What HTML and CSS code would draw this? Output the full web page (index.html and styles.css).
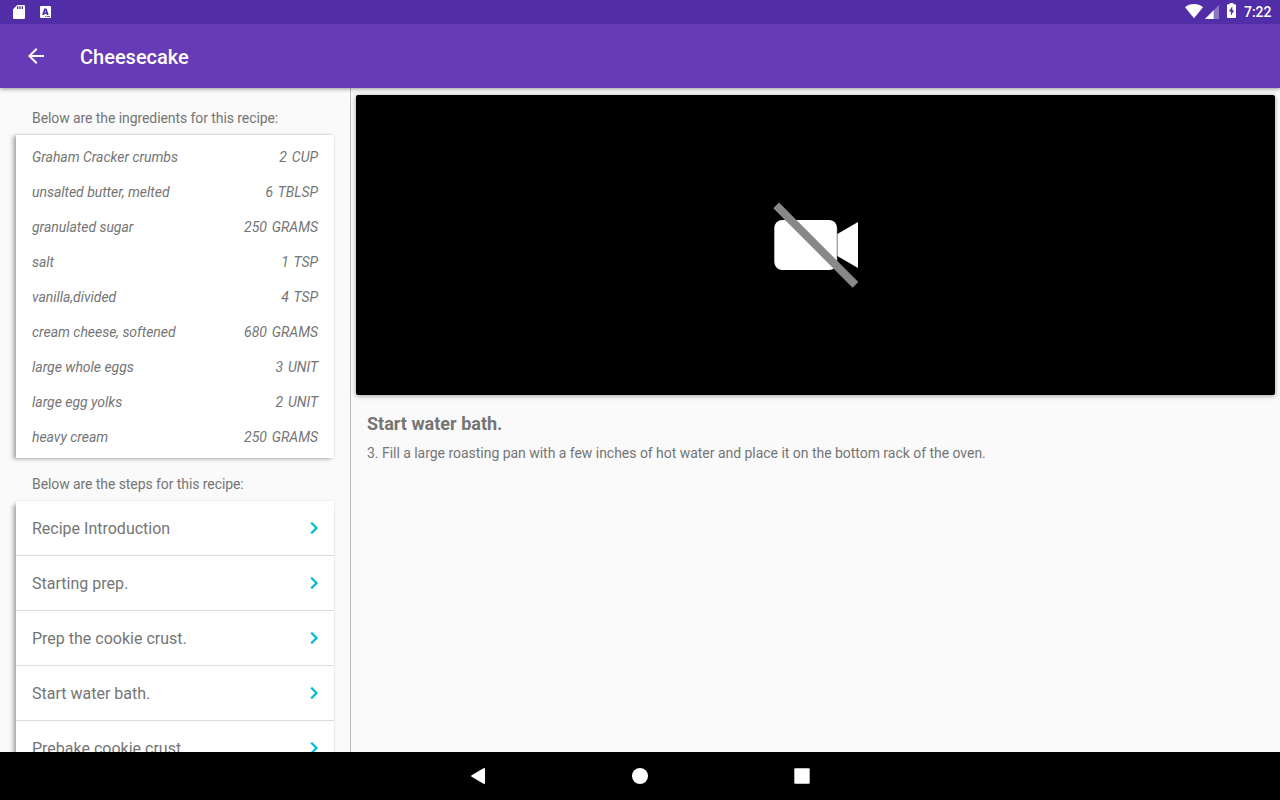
FILE: index.html
```html
<!DOCTYPE html>
<html lang="en">
<head>
<meta charset="utf-8">
<title>Cheesecake</title>
<link rel="stylesheet" href="styles.css">
</head>
<body>
<div class="screen">
  <div class="statusbar">
    <svg class="status-sd" width="12" height="14" viewBox="0 0 12 14"><path fill="#fff" fill-rule="evenodd" d="M4.3 0H10.7Q12 0 12 1.3V12.7Q12 14 10.7 14H1.3Q0 14 0 12.7V4.3ZM4 1.3V4H5.3V1.3ZM6.3 1.3V4H7.6V1.3ZM8.7 1.3V4H10V1.3Z"/></svg>
    <svg class="status-app" width="11" height="12" viewBox="0 0 11 12"><path fill="#fff" fill-rule="evenodd" d="M1 0H10Q11 0 11 1V11Q11 12 10 12H1Q0 12 0 11V1Q0 0 1 0ZM4.2 2.5L2.1 9H4L4.4 7.9H6.4L6.8 9H8.7L6.6 2.5ZM5.4 4.3L6 6.4H4.8ZM5 10V10.8H6.2V10ZM7 10V10.8H10V10Z"/></svg>
    <div class="status-right">
      <svg width="18" height="15" viewBox="0 0 18 15"><path fill="#fff" d="M9 14.3L0 3.3C2.6 1.1 5.6 0 9 0S15.4 1.1 18 3.3Z"/></svg>
      <svg class="signal" width="14" height="14" viewBox="0 0 14 14"><path fill="#fff" opacity=".35" d="M14 0V14H0Z"/><path fill="#fff" d="M8.7 5.3V14H0Z"/></svg>
      <svg class="battery" width="9" height="15" viewBox="0 0 9 15"><path fill="#fff" fill-rule="evenodd" d="M2.7 0H6.3V1.3H8Q9 1.3 9 2.3V14Q9 15 8 15H1Q0 15 0 14V2.3Q0 1.3 1 1.3H2.7ZM5.3 3.3L1.9 8.5H3.9V12.7L7.1 7.2H5.3Z"/></svg>
      <span class="clock">7:22</span>
    </div>
  </div>
  <div class="toolbar">
    <svg class="back" width="24" height="24" viewBox="0 0 24 24"><path fill="#fff" d="M20 11H7.83l5.59-5.59L12 4l-8 8 8 8 1.41-1.41L7.83 13H20z"/></svg>
    <h1 class="title">Cheesecake</h1>
  </div>
  <div class="content">
    <div class="master">
      <p class="caption">Below are the ingredients for this recipe:</p>
      <div class="card ingredients">
        <div class="ingredient"><span>Graham Cracker crumbs</span><span class="amount">2 CUP</span></div>
        <div class="ingredient"><span>unsalted butter, melted</span><span class="amount">6 TBLSP</span></div>
        <div class="ingredient"><span>granulated sugar</span><span class="amount">250 GRAMS</span></div>
        <div class="ingredient"><span>salt</span><span class="amount">1 TSP</span></div>
        <div class="ingredient"><span>vanilla,divided</span><span class="amount">4 TSP</span></div>
        <div class="ingredient"><span>cream cheese, softened</span><span class="amount">680 GRAMS</span></div>
        <div class="ingredient"><span>large whole eggs</span><span class="amount">3 UNIT</span></div>
        <div class="ingredient"><span>large egg yolks</span><span class="amount">2 UNIT</span></div>
        <div class="ingredient"><span>heavy cream</span><span class="amount">250 GRAMS</span></div>
      </div>
      <p class="caption caption-steps">Below are the steps for this recipe:</p>
      <div class="card steps">
        <div class="step"><span>Recipe Introduction</span><svg class="chevron" viewBox="8 6 8 12"><path d="M10 6L8.59 7.41 13.17 12l-4.58 4.59L10 18l6-6z"/></svg></div>
        <div class="step"><span>Starting prep.</span><svg class="chevron" viewBox="8 6 8 12"><path d="M10 6L8.59 7.41 13.17 12l-4.58 4.59L10 18l6-6z"/></svg></div>
        <div class="step"><span>Prep the cookie crust.</span><svg class="chevron" viewBox="8 6 8 12"><path d="M10 6L8.59 7.41 13.17 12l-4.58 4.59L10 18l6-6z"/></svg></div>
        <div class="step"><span>Start water bath.</span><svg class="chevron" viewBox="8 6 8 12"><path d="M10 6L8.59 7.41 13.17 12l-4.58 4.59L10 18l6-6z"/></svg></div>
        <div class="step"><span>Prebake cookie crust.</span><svg class="chevron" viewBox="8 6 8 12"><path d="M10 6L8.59 7.41 13.17 12l-4.58 4.59L10 18l6-6z"/></svg></div>
      </div>
    </div>
    <div class="detail">
      <div class="video">
        <svg width="86" height="86" viewBox="0 0 86 86"><rect x="1.3" y="18" width="62.7" height="50" rx="8" fill="#fff"/><path fill="#fff" d="M64.3 32L85 20V66L64.3 54Z"/><path stroke="#888" stroke-width=".6" d="M64 26V60"/><path fill="#888" d="M6 .5L85.3 80L79.6 85.7L.3 6.2Z"/></svg>
      </div>
      <h2 class="step-title">Start water bath.</h2>
      <p class="step-text">3. Fill a large roasting pan with a few inches of hot water and place it on the bottom rack of the oven.</p>
    </div>
  </div>
  <div class="navbar">
    <svg width="16" height="18" viewBox="0 0 16 18"><path fill="#fff" d="M1.6 8.2L13.5 1.2Q15 .5 15 2V16Q15 17.5 13.5 16.8L1.6 9.8Q.4 9 1.6 8.2Z"/></svg>
    <svg width="16" height="16" viewBox="0 0 16 16"><circle cx="8" cy="8" r="8" fill="#fff"/></svg>
    <svg width="16" height="16" viewBox="0 0 16 16"><rect x=".3" y=".3" width="15.4" height="15.4" rx="1" fill="#fff"/></svg>
  </div>
</div>
</body>
</html>
```
FILE: styles.css
```css
* { box-sizing: border-box; }
body { margin: 0; font-family: Roboto, sans-serif; color: #757575; }
svg { display: block; flex: none; }
h1, h2, p { margin: 0; }

.screen {
  width: 1280px;
  height: 800px;
  display: flex;
  flex-direction: column;
  overflow: hidden;
  background: #fafafa;
}

.statusbar {
  flex: none;
  height: 24px;
  padding: 0 8.5px 0 13px;
  display: flex;
  align-items: center;
  background: #512da8;
}
.status-app { margin-left: 14.5px; }
.status-right { margin-left: auto; display: flex; height: 24px; align-items: flex-start; padding-top: 4px; }
.signal { margin: 1px 8px 0 1.5px; }
.battery { margin-top: -1px; }
.clock { margin-left: 8px; color: #fff; font-size: 14px; font-weight: 500; line-height: 16px; }

.toolbar {
  flex: none;
  height: 64px;
  padding-left: 24px;
  display: flex;
  align-items: center;
  background: #673ab7;
  box-shadow: 0 1px 4px rgba(0, 0, 0, .4);
  z-index: 1;
}
.statusbar { z-index: 2; }
.title { margin: 2px 0 0 32px; color: #fff; font-size: 20px; font-weight: 500; line-height: 24px; }

.content { flex: 1; min-height: 0; display: flex; }
.master {
  width: 351px;
  padding: 20px 16px 0;
  border-right: 1px solid #bdbdbd;
  overflow: hidden;
}
.caption { padding-left: 16px; font-size: 14px; line-height: 20px; letter-spacing: -.08px; }
.caption-steps { margin-top: 16px; }

.card {
  width: 318px;
  background: #fff;
  box-shadow: -3px 1px 4px rgba(0, 0, 0, .3), 0 0 2px rgba(0, 0, 0, .12);
}
.ingredients { height: 323px; margin-top: 7px; padding: 4px 16px 0; }
.ingredient {
  height: 35px;
  display: flex;
  justify-content: space-between;
  align-items: center;
  font-size: 14px;
  font-style: italic;
  letter-spacing: -.03px;
}
.amount { word-spacing: 1.5px; }
.steps { margin-top: 7px; box-shadow: -3px 4px 4px rgba(0, 0, 0, .3), 0 0 2px rgba(0, 0, 0, .12); }
.step {
  height: 55px;
  padding: 0 16px;
  display: flex;
  align-items: center;
  justify-content: space-between;
  border-bottom: 1px solid #dcdcdc;
  font-size: 16px;
}
.chevron { width: 8px; height: 12px; fill: #00bcd4; stroke: #00bcd4; stroke-width: .3; }

.detail { flex: 1; padding: 7px 5px 0; }
.video {
  height: 300px;
  border-radius: 2px;
  background: #000;
  display: flex;
  align-items: center;
  justify-content: center;
  box-shadow: 0 1px 5px rgba(0, 0, 0, .36);
}
.step-title { margin: 18px 0 0 11px; font-size: 18px; font-weight: 700; line-height: 22px; }
.step-text { margin: 8px 0 0 11px; font-size: 14px; line-height: 20px; letter-spacing: -.03px; }

.navbar {
  flex: none;
  height: 48px;
  display: flex;
  align-items: center;
  justify-content: center;
  gap: 146px;
  background: #000;
  z-index: 1;
}
```
